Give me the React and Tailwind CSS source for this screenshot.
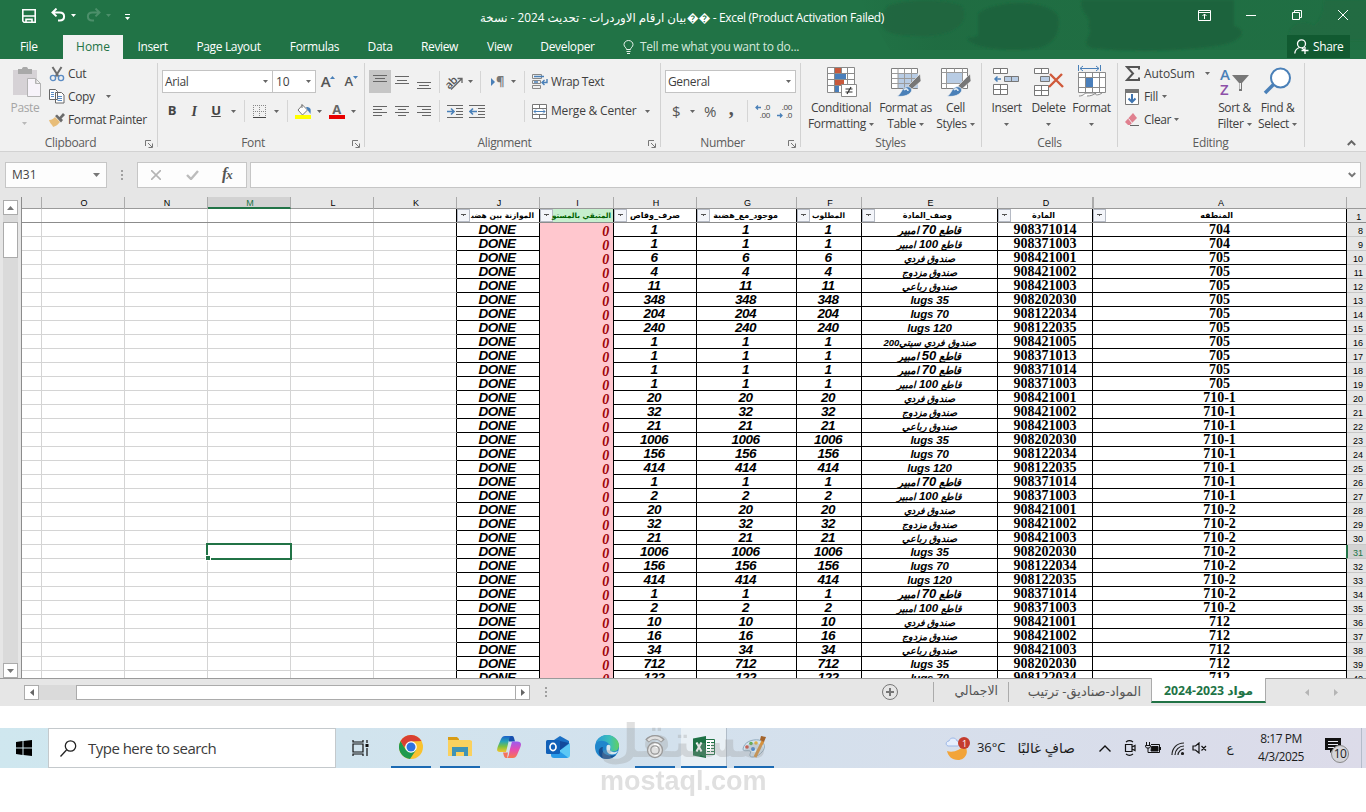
const MATERIALS = {
  q50: ["908371013", "50", "q"],
  q70: ["908371014", "70", "q"],
  q100: ["908371003", "100", "q"],
  s1: ["908421001", "صندوق فردي"],
  s2: ["908421002", "صندوق مزدوج"],
  s4: ["908421003", "صندوق رباعي"],
  s200: ["908421005", "صندوق فردي سيتي200"],
  l35: ["908202030", "lugs 35"],
  l70: ["908122034", "lugs 70"],
  l120: ["908122035", "lugs 120"],
};

const ROWS = [
  ["704", "q70", 1], ["704", "q100", 1], ["705", "s1", 6], ["705", "s2", 4],
  ["705", "s4", 11], ["705", "l35", 348], ["705", "l70", 204], ["705", "l120", 240],
  ["705", "s200", 1], ["705", "q50", 1], ["705", "q70", 1], ["705", "q100", 1],
  ["710-1", "s1", 20], ["710-1", "s2", 32], ["710-1", "s4", 21], ["710-1", "l35", 1006],
  ["710-1", "l70", 156], ["710-1", "l120", 414], ["710-1", "q70", 1], ["710-1", "q100", 2],
  ["710-2", "s1", 20], ["710-2", "s2", 32], ["710-2", "s4", 21], ["710-2", "l35", 1006],
  ["710-2", "l70", 156], ["710-2", "l120", 414], ["710-2", "q70", 1], ["710-2", "q100", 2],
  ["712", "s1", 10], ["712", "s2", 16], ["712", "s4", 34], ["712", "l35", 712],
  ["712", "l70", 122],
];

const GRID =
  "grid grid-cols-[20px_83px_83px_83px_83px_83px_83px_74px_83px_100px_65px_136px_95px_254px_19px]";

const HEADERS = [
  ["J", "الموازنة بين هضب\u200d", "pr-[5px] text-[7.5px] tracking-[-0.2px]"],
  ["I", "المتبقي بالمستو", "pr-[2px] text-[7.25px] tracking-[-0.2px]"],
  ["H", "صرف_وقاص", "pr-[16px] text-[8px]"],
  ["G", "موجود_مع_هضبة", "pr-[18px] text-[8px]"],
  ["F", "المطلوب", "pr-[16px] text-[7.5px]"],
  ["E", "وصف_المادة", "pr-[45px] text-[8px]"],
  ["D", "المادة", "pr-[37px] text-[8px]"],
  ["A", "المنطقه", "pr-[113px] text-[8px]"],
];

function Caret({ className = "" }) {
  return (
    <svg className={`shrink-0 ${className}`} width="5" height="3" viewBox="0 0 5 3" fill="#666">
      <path d="M0 0h5L2.5 3z" />
    </svg>
  );
}

function Sep({ className = "" }) {
  return <div className={`w-px shrink-0 bg-[#d5d5d5] ${className}`} />;
}

function Slot({ w, children, className = "" }) {
  return (
    <div className={`flex h-full shrink-0 items-center justify-center ${w} ${className}`}>
      {children}
    </div>
  );
}

function Group({ w, label, labelPad = "", launcher, children }) {
  return (
    <div className={`flex shrink-0 ${w}`}>
      <div className="flex min-w-0 flex-1 flex-col">
        <div className="h-[77px]">{children}</div>
        <div className="flex h-[14px] items-center text-[12px] text-[#5c5c5c]">
          <span className={`flex-1 text-center ${labelPad}`}>{label}</span>
          {launcher && (
            <svg className="mt-[2px] mr-[4px]" width="8" height="8" viewBox="0 0 8 8" fill="none" stroke="#777">
              <path d="M.5 6V.5H6M3 3l4 4M7.5 3.5v4h-4" />
            </svg>
          )}
        </div>
      </div>
      <div className="mt-1 h-[84px] w-px bg-[#d2d2d2]" />
    </div>
  );
}

function BigButton({ w, icon, lines }) {
  return (
    <div className={`flex shrink-0 flex-col items-center ${w}`}>
      <div className="flex h-[41px] items-end pb-[3px]">{icon}</div>
      <div className="h-4 leading-4 whitespace-nowrap">{lines[0]}</div>
      <div className="flex h-4 items-center gap-[3px] leading-4 whitespace-nowrap">
        {lines[1]}
        <Caret />
      </div>
    </div>
  );
}

function TitleBar() {
  return (
    <div className="relative flex h-[35px] text-white">
      <svg className="absolute top-0 left-[860px]" width="506" height="59" viewBox="0 0 506 59" fill="#1f643d">
        <defs>
          <linearGradient id="ink">
            <stop offset="0" stopColor="#1f6b41" stopOpacity="0" />
            <stop offset=".15" stopColor="#1f6b41" stopOpacity=".8" />
            <stop offset="1" stopColor="#1f6b41" stopOpacity=".5" />
          </linearGradient>
          <filter id="soften"><feGaussianBlur stdDeviation="1.2" /></filter>
        </defs>
        <path fill="url(#ink)" d="M0 0h506v50H30z" />
        <g filter="url(#soften)">
          <path d="M28 6c18-8 60-6 74 0 8 14-4 32-46 30-26 0-46-6-28-30z" opacity=".8" />
          <path d="M118 14c14-14 70-16 80 2 4 16-6 30-20 32-22 3-52 2-66-5-12-8 4-4 6-8z" />
          <path d="M222 0h152v26c14 4 8 14-8 18-40 8-100 8-134 4-14-6 4-14-4-22 6-8-10-14-6-26z" />
          <path d="M430 40c-4-14 12-22 24-14 8-6 10-16 10-26h42v40z" opacity=".45" />
        </g>
      </svg>
      <div className="relative flex w-full items-center">
        <svg className="mb-[4px] ml-[22px]" width="14" height="14" viewBox="0 0 14 14" fill="none" stroke="#fff" strokeWidth="1.6">
          <path d="M.8.8h12.4v12.4H2L.8 12zM1 7h12M4 13v-2.600h6V13" />
        </svg>
        <svg className="mb-[5px] ml-[15px]" width="15" height="14" viewBox="0 0 15 14" fill="none" stroke="#fff" strokeWidth="2">
          <path d="M5.5.6 1.500 4.500l4 3.900M2 4.500h6.500c3 0 4.600 1.800 4.600 4s-1.600 4-4.400 4H7" />
        </svg>
        <svg className="mb-[5px] ml-[5px]" width="5" height="3" fill="#fff"><path d="M0 0h5L2.500 3z" /></svg>
        <svg className="mb-[5px] ml-[10px]" width="15" height="14" viewBox="0 0 15 14" fill="none" stroke="#4c8f6a" strokeWidth="2">
          <path d="m9.500.6 4 3.900-4 3.900M13 4.500H6.500c-3 0-4.600 1.800-4.600 4s1.600 4 4.400 4H8" />
        </svg>
        <svg className="mb-[5px] ml-[5px]" width="5" height="3" fill="#4c8f6a"><path d="M0 0h5L2.500 3z" /></svg>
        <svg className="mb-[1px] ml-[14px]" width="5" height="7" fill="#fff"><path d="M0 0h5v1H0zM0 3h5L2.500 6z" /></svg>
        <div className="ml-[350px] flex w-[404px] items-center justify-between text-[12px] whitespace-nowrap">
          <span dir="rtl" className="text-[11.750px] tracking-normal">بيان ارقام الاوردرات - تحديث 2024 - نسخة</span>
          <span className="tracking-[-0.370px]">�� - Excel (Product Activation Failed)</span>
        </div>
        <svg className="mb-[5px] ml-[314px]" width="13" height="11" viewBox="0 0 13 11" fill="none" stroke="#fff">
          <path d="M.5.5h12v10H.5zM.5 2.500h12M6.500 9V4M4.500 6l2-2 2 2" />
        </svg>
        <svg className="mb-[5px] ml-[35px]" width="10" height="1" stroke="#fff"><path d="M0 .5h10" /></svg>
        <svg className="mb-[5px] ml-[36px]" width="10" height="10" viewBox="0 0 10 10" fill="none" stroke="#fff">
          <path d="M.5 2.500h7v7h-7zM2.500 2.500v-2h7v7h-2" />
        </svg>
        <svg className="mb-[5px] ml-[36px]" width="10" height="10" stroke="#fff"><path d="m0 0 10 10M10 0 0 10" /></svg>
      </div>
    </div>
  );
}

function Tabs() {
  return (
    <div className="relative flex h-6 items-center text-[12px] text-white">
      <div className="w-[63px] pl-[20px]">File</div>
      <div className="flex h-full w-[60px] items-center justify-center bg-[#f1f1f1] tracking-normal text-[#217346]">Home</div>
      <div className="w-[59px] text-center">Insert</div>
      <div className="w-[93px] text-center">Page Layout</div>
      <div className="w-[79px] text-center">Formulas</div>
      <div className="w-[52px] text-center">Data</div>
      <div className="w-[67px] text-center">Review</div>
      <div className="w-[53px] text-center">View</div>
      <div className="w-[83px] text-center">Developer</div>
      <svg className="ml-[14px]" width="11" height="14" viewBox="0 0 11 14" fill="none" stroke="#e6f2ea">
        <path d="M3.500 9.500C3.500 7.500 1 7 1 4.600a4.500 4.100 0 0 1 9 0C10 7 7.500 7.500 7.500 9.500zM3.500 11.500h4M4 13.500h3" />
      </svg>
      <div className="ml-[6px] w-[160px] tracking-[-0.270px] whitespace-nowrap text-[#d6e8dd]">Tell me what you want to do...</div>
      <div className="mb-px ml-[487px] flex h-[23px] w-[63px] items-center bg-[#115a31] pl-[7px]">
        <svg width="15" height="15" viewBox="0 0 15 15" fill="none" stroke="#fff" strokeWidth="1.300">
          <circle cx="7.500" cy="4.800" r="4" />
          <path d="M5.500 8.500C2.500 9.500 1 11.500.8 14.500M8 9l2.500 2M11 8v7M7.500 11.500h7" />
        </svg>
        <span className="ml-[4px]">Share</span>
      </div>
    </div>
  );
}

function Lines({ rows, className = "" }) {
  return (
    <svg className={className} width="15" height="14" viewBox="0 0 15 14" stroke="#666">
      {rows.map(([x, y, w]) => (
        <path key={y} d={`M${x} ${y + 0.5}h${w}`} />
      ))}
    </svg>
  );
}

function TableIcon({ highlight }) {
  return (
    <svg width="31" height="30" viewBox="0 0 31 30" fill="none" stroke="#808080">
      <path fill="#fff" d="M1.500 1.500h26v20h-26z" />
      <path fill="#b8cce4" stroke="none" d={highlight ? "M7 6h15v10H7z" : "M8 6h20v15H8z"} />
      <path stroke="#9a9a9a" d={highlight ? "M1.500 5.500h26M1.500 16.500h26M6.500 1.500v20M22.500 1.500v20M14.500 1.500v4" : "M1.500 6.500h26M1.500 11.500h26M1.500 16.500h26M8 1.500v20M14.500 1.500v20M21.500 1.500v20"} />
      <path fill="#777" stroke="#f1f1f1" strokeWidth=".6" d="m30 7 1 7-9 8-4-3z" />
      <path fill="#4a80b8" stroke="#f1f1f1" strokeWidth=".6" d="M7 29c4-1 4-7 9-9 4-1 7 2 5 5-3 4-9 5-14 4z" />
      <path stroke="#dce8f4" strokeWidth="1.600" d="M14 23c2-2 4-1 4 1" />
    </svg>
  );
}

function Ribbon() {
  return (
    <div className="flex h-[93px] border-b border-[#d2d2d2] bg-[#f1f1f1] text-[12px] text-[#3f3f3f]">
      <Group w="w-[158px]" label="Clipboard" labelPad="pr-[4px]" launcher>
        <div className="flex">
          <div className="flex w-[49px] flex-col items-center text-[#a5a5a5]">
            <svg className="mt-[8px] ml-[5px]" width="29" height="31" viewBox="0 0 29 31">
              <path fill="#d6d2d6" d="M0 3h24v25H0z" />
              <path fill="#a9a9a9" d="M5 2h4c0-3 6-3 6 0h4v5H5z" />
              <path fill="#f7f3fa" stroke="#b3b3b3" d="M14.500 11.500h8l5 5v13h-13zM22.500 11.500v5h5" />
            </svg>
            <div className="mt-[2px] ml-[1px] leading-4">Paste</div>
            <Caret className="mt-[6px] opacity-40" />
          </div>
          <div className="pt-[3px]">
            <div className="flex h-[23px] items-center">
              <svg width="16" height="16" viewBox="0 0 16 16" fill="none" stroke="#6d6d6d" strokeWidth="2">
                <path d="m3.500 1 6 9.500M12.500 1l-6 9.500" />
                <circle cx="4" cy="12" r="2.600" stroke="#5b8cc4" strokeWidth="1.400" />
                <circle cx="12" cy="12" r="2.600" stroke="#5b8cc4" strokeWidth="1.400" />
              </svg>
              <span className="ml-[3px]">Cut</span>
            </div>
            <div className="flex h-[23px] items-center">
              <svg width="16" height="15" viewBox="0 0 16 15" fill="#fff" stroke="#666">
                <path d="M.5.5h6l2 2v8h-8zM6.500 3.500h6l2.500 2.500v8H6.500z" />
                <path stroke="#5b8cc4" d="M2 3.500h3M2 5.500h3M2 7.500h3M8.500 7.500h4.500M8.500 9.500h4.500M8.500 11.500h4.500" />
              </svg>
              <span className="ml-[3px]">Copy</span>
              <Caret className="ml-[11px]" />
            </div>
            <div className="flex h-[23px] items-center">
              <svg width="16" height="14" viewBox="0 0 16 14">
                <path fill="#e8bd78" d="M0 7c3 0 5-2 6-3l5 5c-2 2-3 4-7 5 0-2-3-3-4-7z" />
                <path fill="#6b6b6b" d="m6 3 2-1.500 2.500 2.500L14 0l2 2-3.500 3.500L14 7l-2 2.500z" />
              </svg>
              <span className="ml-[3px] whitespace-nowrap">Format Painter</span>
            </div>
          </div>
        </div>
      </Group>

      <Group w="w-[207px]" label="Font" labelPad="pl-[4px] pr-[8px]" launcher>
        <div className="mt-[11px] mb-[7px] flex h-[23px] items-center pl-[4px]">
          <div className="flex h-full w-[111px] items-center justify-between border border-[#c3c3c3] bg-white pr-[4px] pl-[2px]">
            Arial <Caret />
          </div>
          <div className="flex h-full w-[43px] items-center justify-between border border-l-0 border-[#c3c3c3] bg-white pr-[4px] pl-[3px] tracking-normal">
            10 <Caret />
          </div>
          <Slot w="w-[24px]">
            <span className="text-[15px] leading-none font-semibold text-[#555]">A</span>
            <svg className="mb-[9px]" width="5" height="3" fill="#4a80b8"><path d="M0 3h5L2.500 0z" /></svg>
          </Slot>
          <Slot w="w-[22px]">
            <span className="text-[13px] leading-none font-semibold text-[#555]">A</span>
            <svg className="mb-[9px]" width="5" height="3" fill="#4a80b8"><path d="M0 0h5L2.500 3z" /></svg>
          </Slot>
        </div>
        <div className="flex h-[22px] items-center pl-[3px] text-[13px] text-[#444]">
          <Slot w="w-[22px]" className="font-bold">B</Slot>
          <Slot w="w-[22px]" className="font-['Liberation_Serif'] text-[14px] font-bold italic">I</Slot>
          <Slot w="w-[22px]" className="font-bold underline">U</Slot>
          <Slot w="w-[13px]"><Caret /></Slot>
          <Slot w="w-[8px]"><Sep className="h-[22px]" /></Slot>
          <Slot w="w-[22px]">
            <svg width="13" height="13" viewBox="0 0 13 13" fill="none" stroke="#888">
              <path strokeDasharray="1 1" d="M.5 0v12M6.500 0v12M12.500 0v12M0 .5h13M0 6.500h13" />
              <path stroke="#444" d="M0 12.500h13" />
            </svg>
          </Slot>
          <Slot w="w-[12px]"><Caret /></Slot>
          <Slot w="w-[11px]"><Sep className="h-[22px]" /></Slot>
          <Slot w="w-[20px]">
            <svg width="17" height="16" viewBox="0 0 17 16">
              <path fill="#ff0" d="M0 12h16v4H0z" />
              <path fill="#fff" stroke="#777" d="m7.500 2 5 5-5 5-4.500-5zM7 5V1" />
              <path fill="#4a80b8" d="M11 4c5 0 5 2 4.500 7L12.500 7z" />
            </svg>
          </Slot>
          <Slot w="w-[12px]"><Caret /></Slot>
          <Slot w="w-[23px]">
            <div className="flex h-4 w-4 items-start justify-center border-b-4 border-[#e80000] text-[13px] leading-[12px] font-bold text-[#666]">A</div>
          </Slot>
          <Slot w="w-[10px]"><Caret /></Slot>
        </div>
      </Group>

      <Group w="w-[296px]" label="Alignment" labelPad="pr-[4px]" launcher>
        <div className="mt-[11px] mb-[7px] flex h-[23px] items-center pl-[4px]">
          <Slot w="w-[22px]" className="bg-[#c6c6c6]"><Lines rows={[[0, 2, 14], [2, 5, 10], [0, 8, 14]]} className="mb-1" /></Slot>
          <Slot w="w-[22px]"><Lines rows={[[0, 2, 14], [2, 6, 10], [0, 9, 14]]} className="mb-px" /></Slot>
          <Slot w="w-[22px]"><Lines rows={[[0, 5, 14], [2, 8, 10], [0, 11, 14]]} className="mt-1" /></Slot>
          <Slot w="w-[8px]"><Sep className="h-[22px]" /></Slot>
          <Slot w="w-[23px]">
            <svg width="17" height="16" viewBox="0 0 17 16" fill="none" stroke="#666" className="overflow-visible">
              <path strokeWidth="1.300" d="M5 15.500 15.500 5M11.500 4.500H16v4.500" />
              <text x="-1.500" y="11.500" transform="rotate(-45 6 8)" fontSize="11" fill="#555" stroke="none" fontWeight="600">ab</text>
            </svg>
          </Slot>
          <Slot w="w-[8px]"><Caret /></Slot>
          <Slot w="w-[12px]"><Sep className="h-[22px]" /></Slot>
          <Slot w="w-[23px]">
            <svg width="5" height="8" fill="#4a80b8"><path d="M0 0v8l4-4z" /></svg>
            <span className="text-[13px] leading-none font-bold text-[#777]">¶</span>
          </Slot>
          <Slot w="w-[8px]"><Caret /></Slot>
          <Slot w="w-[14px]"><Sep className="h-[22px]" /></Slot>
          <svg className="ml-px shrink-0" width="16" height="16" viewBox="0 0 16 16" fill="none" stroke="#888">
            <path d="M.5.500h9v4h-9zM.5 6.500h8v3h-8zM.5 11.500h8v3h-8z" />
            <path stroke="#4a80b8" strokeWidth="1.400" d="M2 2.500h10M2 8h4M15 5v3.500h-5M12.500 6l-2.500 2.500 2.500 2.500" />
          </svg>
          <span className="ml-[3px] tracking-[-0.450px] whitespace-nowrap">Wrap Text</span>
        </div>
        <div className="flex h-[22px] items-center pl-[4px]">
          <Slot w="w-[22px]"><Lines rows={[[0, 2, 14], [0, 5, 9], [0, 8, 14], [0, 11, 9]]} /></Slot>
          <Slot w="w-[22px]"><Lines rows={[[0, 2, 14], [3, 5, 8], [0, 8, 14], [3, 11, 8]]} /></Slot>
          <Slot w="w-[22px]"><Lines rows={[[0, 2, 14], [5, 5, 9], [0, 8, 14], [5, 11, 9]]} /></Slot>
          <Slot w="w-[8px]"><Sep className="h-[22px]" /></Slot>
          <Slot w="w-[24px]">
            <svg width="16" height="13" viewBox="0 0 16 13" stroke="#666" fill="none">
              <path d="M0 .5h16M9 3.500h7M9 6.500h7M9 9.500h7M0 12.500h16" />
              <path stroke="#4a80b8" strokeWidth="1.600" d="M0 6.500h7M4 3.500l3 3-3 3" />
            </svg>
          </Slot>
          <Slot w="w-[20px]">
            <svg width="16" height="13" viewBox="0 0 16 13" stroke="#666" fill="none">
              <path d="M0 .5h16M9 3.500h7M9 6.500h7M9 9.500h7M0 12.500h16" />
              <path stroke="#4a80b8" strokeWidth="1.600" d="M1 6.500h7M4 3.500l-3 3 3 3" />
            </svg>
          </Slot>
          <Slot w="w-[38px]" className="justify-end"><Sep className="h-[22px]" /></Slot>
          <svg className="ml-[7px] shrink-0" width="15" height="15" viewBox="0 0 15 15" fill="#fff" stroke="#777">
            <path d="M.5.500h14v14H.5zM.5 4.500h14M.5 10.500h14M7.500.500v4M7.500 10.500v4" />
            <path stroke="#4a80b8" d="M2 7.500h11M4 5.500l-2 2 2 2M11 5.500l2 2-2 2" />
          </svg>
          <span className="ml-[4px] whitespace-nowrap tracking-[-0.200px]">Merge &amp; Center</span>
          <Caret className="ml-[9px]" />
        </div>
      </Group>

      <Group w="w-[140px]" label="Number" labelPad="pr-[4px]" launcher>
        <div className="mt-[11px] mb-[7px] ml-[4px] flex h-[23px] w-[131px] items-center justify-between border border-[#c3c3c3] bg-white pr-[4px] pl-[2px]">
          General <Caret />
        </div>
        <div className="flex h-[22px] items-center pl-[4px] text-[15px] text-[#555]">
          <Slot w="w-[22px]">$</Slot>
          <Slot w="w-[10px]"><Caret /></Slot>
          <Slot w="w-[26px]">%</Slot>
          <Slot w="w-[16px]" className="pb-[7px] font-['Liberation_Serif'] text-[20px] font-bold">,</Slot>
          <Slot w="w-[16px]"><Sep className="h-[22px]" /></Slot>
          <Slot w="w-[15px]" className="flex-col text-[8px] leading-[8px] text-[#444]">
            <div className="flex h-[8px] w-[15px] items-center justify-between">
              <svg width="6" height="5" fill="none" stroke="#4a80b8" strokeWidth="1.300"><path d="M1 2.500h5M3 .5 1 2.500l2 2" /></svg>
              .0
            </div>
            <div className="h-[8px] w-[15px] text-right">.00</div>
          </Slot>
          <Slot w="w-[29px]" className="flex-col text-[8px] leading-[8px] text-[#444]">
            <div className="h-[8px] w-[15px] text-right">.00</div>
            <div className="flex h-[8px] w-[15px] items-center justify-between">
              <svg width="6" height="5" fill="none" stroke="#4a80b8" strokeWidth="1.300"><path d="M0 2.500h5M3 .5l2 2-2 2" /></svg>
              .0
            </div>
          </Slot>
        </div>
      </Group>

      <Group w="w-[181px]" label="Styles" labelPad="pr-[1px]">
        <div className="flex">
          <BigButton
            w="w-[80px]"
            lines={["Conditional", "Formatting"]}
            icon={
              <svg width="31" height="31" viewBox="0 0 31 31" fill="#fff" stroke="#8a8a8a">
                <path d="M1.500 1.500h27v25h-27z" />
                <path stroke="none" fill="#c8593c" d="M9 2h6v6H9zM9 14h9v6H9z" />
                <path stroke="none" fill="#4a7fbb" d="M9 8h11v6H9zM9 20h4v6H9z" />
                <path fill="none" d="M1.500 7.500h27M1.500 13.500h27M1.500 19.500h27M8.500 1.500v25M15.500 1.500v6M21.500 1.500v25" />
                <path d="M15.500 18.500h15v12h-15z" />
                <path stroke="#333" strokeWidth="1.200" d="M19.500 23h7M19.500 26h7M25 21l-4 7" />
              </svg>
            }
          />
          <BigButton w="w-[49px]" lines={["Format as", "Table"]} icon={<TableIcon />} />
          <BigButton w="w-[51px]" lines={["Cell", "Styles"]} icon={<TableIcon highlight />} />
        </div>
      </Group>

      <Group w="w-[136px]" label="Cells">
        <div className="flex pl-[3px]">
          <BigButton
            w="w-[43px]"
            lines={["Insert", null]}
            icon={
              <svg width="27" height="30" viewBox="0 0 27 30" fill="#fff" stroke="#777">
                <path d="M.5 1.500h14v5H.5zM7.500 1.500v5M.5 17.500h14v10H.5zM.5 22.500h14M7.500 17.500v10" />
                <path fill="#b8cce4" d="M11.500 9.500h14v5h-14zM18.500 9.500v5" />
                <path fill="none" stroke="#4a80b8" strokeWidth="1.500" d="M2 12h6M4.500 9.500 2 12l2.500 2.500" />
              </svg>
            }
          />
          <BigButton
            w="w-[41px]"
            lines={["Delete", null]}
            icon={
              <svg width="30" height="30" viewBox="0 0 30 30" fill="#fff" stroke="#777">
                <path d="M.5 1.500h14v5H.5zM7.500 1.500v5M.5 18.500h14v10H.5zM.5 23.500h14M7.500 18.500v10" />
                <path fill="#b8cce4" d="M6.500 9.500h9v5h-9z" />
                <path fill="none" stroke="#d0593a" strokeWidth="2.400" d="m16 7 13 13M28 7 15 20" />
              </svg>
            }
          />
          <BigButton
            w="w-[45px]"
            lines={["Format", null]}
            icon={
              <svg width="28" height="32" viewBox="0 0 28 32" fill="#fff" stroke="#8a8a8a">
                <path d="M.5 7.500h27v20H.5zM.5 12.500h27M.5 22.500h27M7.500 7.500v20M14.500 7.500v20M21.500 7.500v20" />
                <path fill="#4a7fbb" stroke="none" d="M8 13h7v9H8z" />
                <path fill="none" stroke="#4a80b8" d="M.5 0v6M22.500 0v6M2 3.500h19M5 1 2 3.500 5 6M18 1l3 2.500L18 6" />
                <path d="M1 31c5 0 5-3 8-3h9c-3 2-5 3-9 3M18 28c-2 2 2 3 6 0" />
              </svg>
            }
          />
        </div>
      </Group>

      <Group w="w-[187px]" label="Editing" labelPad="pr-px">
        <div className="flex">
          <div className="w-[95px] pt-[3px] pl-[7px]">
            <div className="flex h-[23px] items-center">
              <svg width="15" height="15" viewBox="0 0 15 15" fill="none" stroke="#555" strokeWidth="2">
                <path d="M14 3.500V1H2l6 6.500L2 14h12v-2.500" />
              </svg>
              <span className="ml-[4px] tracking-[-0.100px]">AutoSum</span>
              <Caret className="ml-[10px]" />
            </div>
            <div className="flex h-[23px] items-center">
              <svg width="14" height="16" viewBox="0 0 14 16" fill="#fff" stroke="#777">
                <path d="M.5.500h13v15H.5z" />
                <path fill="#777" d="M.5.500h13v3H.5z" />
                <path fill="none" stroke="#3f74b0" strokeWidth="2" d="M7 5v8M3.500 9.500 7 13l3.500-3.500" />
              </svg>
              <span className="ml-[5px]">Fill</span>
              <Caret className="ml-[4px]" />
            </div>
            <div className="flex h-[23px] items-center">
              <svg width="14" height="14" viewBox="0 0 14 14">
                <path fill="#e0808f" d="m8 0 4 5-7 7H3L0 9z" />
                <path stroke="#f1f1f1" d="m3.500 5.500 4 5" />
                <path stroke="#666" d="M5 12.500h9" />
              </svg>
              <span className="ml-[5px]">Clear</span>
              <Caret className="ml-[3px]" />
            </div>
          </div>
          <BigButton
            w="w-[43px]"
            lines={["Sort &", "Filter"]}
            icon={
              <div className="flex h-[30px] w-[29px] font-semibold">
                <div className="w-[12px] text-[15px] leading-[15px]">
                  <div className="text-[#4a80b8]">A</div>
                  <div className="text-[#8d50a8]">Z</div>
                </div>
                <svg className="mt-[8px]" width="17" height="16" viewBox="0 0 17 16">
                  <path fill="#777" d="M0 0h17l-7 8v8H7V8z" />
                  <path fill="#f1f1f1" d="M7.500 8H9v6H7.500z" />
                </svg>
              </div>
            }
          />
          <BigButton
            w="w-[43px]"
            lines={["Find &", "Select"]}
            icon={
              <svg width="29" height="30" viewBox="0 0 29 30" fill="#fff" stroke="#4a80b8">
                <path strokeWidth="3.500" d="m11 17-9 9" />
                <circle cx="17.500" cy="11" r="9.500" strokeWidth="2" />
              </svg>
            }
          />
        </div>
      </Group>
      <svg className="mt-[81px] ml-[42px]" width="9" height="6" fill="none" stroke="#666" strokeWidth="2">
        <path d="m.8 5 3.700-3.700L8.200 5" />
      </svg>
    </div>
  );
}

function FormulaBar() {
  return (
    <div className="flex h-[45px] bg-[#e6e6e6] pt-[10px] text-[12px] text-[#444]">
      <div className="ml-[5px] flex h-[26px] w-[102px] items-center justify-between border border-[#c6c6c6] bg-[#fdfdfd] pr-[6px] pl-[6px] tracking-normal">
        M31
        <svg width="7" height="4" fill="#777"><path d="M0 0h7L3.500 4z" /></svg>
      </div>
      <svg className="mt-[8px] ml-[14px]" width="2" height="10" fill="#a0a0a0"><path d="M0 0h2v2H0zM0 4h2v2H0zM0 8h2v2H0z" /></svg>
      <div className="ml-[14px] flex h-[26px] w-[110px] items-center border border-[#c6c6c6] bg-[#fdfdfd]">
        <svg className="ml-[13px]" width="10" height="10" stroke="#b5b5b5" strokeWidth="1.600"><path d="m0 0 10 10M10 0 0 10" /></svg>
        <svg className="ml-[25px]" width="13" height="10" fill="none" stroke="#bcbcbc" strokeWidth="2.400"><path d="m1 5 4 4 7-8" /></svg>
        <span className="ml-[23px] pb-[3px] font-['Liberation_Serif'] text-[16px] leading-none font-bold tracking-[-1px] text-[#555] italic">
          f<span className="text-[13px]">x</span>
        </span>
      </div>
      <div className="ml-[3px] flex h-[26px] w-[1111px] items-center justify-end border border-[#c6c6c6] bg-[#fdfdfd] pr-[4px]">
        <svg width="8" height="6" fill="none" stroke="#777" strokeWidth="2"><path d="M.8 1 4 4.200 7.200 1" /></svg>
      </div>
    </div>
  );
}

function VerticalScroll() {
  return (
    <div className="flex w-[21px] flex-col bg-[#e6e6e6] pt-[3px] pl-[3px]">
      <div className="flex h-[15px] w-[15px] items-center justify-center border border-[#ababab] bg-white">
        <svg width="7" height="4" fill="#777"><path d="M0 4h7L3.500 0z" /></svg>
      </div>
      <div className="w-[15px] flex-1 bg-[#dadada] pt-[7px]">
        <div className="h-[36px] border border-[#ababab] bg-white" />
      </div>
      <div className="flex h-[15px] w-[15px] items-center justify-center border border-[#ababab] bg-white">
        <svg width="7" height="4" fill="#777"><path d="M0 0h7L3.500 4z" /></svg>
      </div>
    </div>
  );
}

function EmptyCells({ selected, bottom = "border-b" }) {
  return ["P", "O", "N", "M", "L", "K"].map((c) => (
    <div
      key={c}
      className={`relative border-r border-b-[#d4d4d4] ${bottom} ${c === "K" ? "border-r-black" : "border-r-[#d4d4d4]"}`}
    >
      {selected && c === "M" && (
        <div className="absolute -top-[2px] -left-[2px] z-10 h-[17px] w-[86px] border-2 border-[#217346]">
          <div className="absolute -bottom-[3px] -left-[3px] h-[6px] w-[6px] border border-white bg-[#217346]" />
        </div>
      )}
    </div>
  ));
}

function Description({ id }) {
  const [, text, kind] = MATERIALS[id];
  if (kind === "q") {
    return (
      <span dir="rtl" className={text === "100" ? "text-[9.500px]" : "text-[10.500px]"}>
        قاطع <span className={text === "100" ? "text-[11.500px]" : "text-[13px]"}>{text}</span> امبير
      </span>
    );
  }
  return text.startsWith("lugs") ? (
    <span className="text-[11.500px] tracking-[-0.200px]">{text}</span>
  ) : (
    <span dir="rtl" className="text-[9.500px]">{text}</span>
  );
}

function DataRow({ row, number }) {
  const [area, id, qty] = row;
  const cell = "flex h-[14px] items-center justify-center border-r border-b border-black whitespace-nowrap";
  const num = `${cell} font-['Liberation_Sans'] text-[13.500px] font-bold italic leading-[13px] pr-[2px] tracking-[-0.500px]`;
  const serif = `${cell} font-['Liberation_Serif'] text-[14px] font-bold leading-[13px] tracking-normal`;
  const active = number === 31;
  return (
    <div className={`h-[14px] text-black ${GRID}`}>
      <EmptyCells selected={active} />
      <div className={num}>DONE</div>
      <div className="flex h-[14px] justify-end border-r border-black bg-[#ffc7ce] pr-[4px] font-['Liberation_Serif'] text-[14px] leading-[17px] font-bold text-[#9c0006] italic">
        0
      </div>
      <div className={num}>{qty}</div>
      <div className={num}>{qty}</div>
      <div className={num}>{qty}</div>
      <div className={`${cell} pt-px font-['Liberation_Sans','DejaVu_Sans',sans-serif] text-[10px] leading-[13px] font-bold italic`}>
        <Description id={id} />
      </div>
      <div className={serif}>{MATERIALS[id][0]}</div>
      <div className={serif}>{area}</div>
      <div
        className={`flex items-end justify-end border-b border-[#c8c8c8] pr-[3px] font-['Liberation_Sans'] text-[9px] leading-[10px] tracking-normal ${active ? "-ml-px border-l-2 border-l-[#217346] bg-[#d2d2d2] text-[#217346]" : "bg-[#e6e6e6]"}`}
      >
        {number}
      </div>
    </div>
  );
}

function Sheet() {
  return (
    <div className="flex h-[481px]">
      <VerticalScroll />
      <div className="min-w-0 flex-1 overflow-hidden border-l border-[#8c8c8c] bg-white">
        <div className={`-ml-px h-[12px] border-b border-[#9a9a9a] bg-[#e6e6e6] pl-px font-['Liberation_Sans'] text-[9px] leading-[12px] tracking-normal text-black ${GRID}`}>
          {["", "O", "N", "M", "L", "K", "J", "I", "H", "G", "F", "E", "D", "A"].map((c) => (
            <div
              key={c}
              className={`h-[12px] border-r border-[#ababab] pl-[2px] text-center ${c === "M" ? "border-b-2 border-b-[#217346] bg-[#d2d2d2] text-[#217346]" : ""} ${c === "A" ? "border-l" : ""}`}
            >
              {c}
            </div>
          ))}
        </div>
        <div className={`h-[14px] border-b border-[#8c8c8c] ${GRID}`}>
          <EmptyCells bottom="border-b-0" />
          {HEADERS.map(([c, text, fit]) => (
            <div
              key={c}
              className={`flex h-[13px] min-w-0 items-center border-r border-black ${c === "I" ? "bg-[#c6efce] text-[#006100]" : "text-black"}`}
            >
              <div className="flex h-[13px] w-[13px] shrink-0 items-center justify-center border border-[#b5bac4] bg-[#f3f5fa]">
                <svg width="5" height="3" fill="#555"><path d="M0 0h5v1H0zM2 1h1v1H2z" /></svg>
              </div>
              <div dir="rtl" className={`h-[13px] min-w-0 flex-1 font-['DejaVu_Sans',sans-serif] leading-[13px] font-bold whitespace-nowrap ${fit}`}>
                {text}
              </div>
            </div>
          ))}
          <div className="bg-[#e6e6e6] pt-[3px] pr-[5px] text-right font-['Liberation_Sans'] text-[9px] leading-[10px]">1</div>
        </div>
        {ROWS.map((row, i) => (
          <DataRow key={i} row={row} number={i + 8} />
        ))}
      </div>
    </div>
  );
}

function SheetTabs() {
  return (
    <div className="flex h-[28px] border-t border-[#9a9a9a] bg-[#e6e6e6] text-[12px] tracking-normal text-[#555]">
      <div className="mt-[6px] ml-[24px] flex h-[15px] w-[506px] bg-[#dadada]">
        <div className="flex w-[15px] items-center justify-center border border-[#ababab] bg-white">
          <svg width="4" height="7" fill="#666"><path d="M4 0v7L0 3.500z" /></svg>
        </div>
        <div className="ml-[37px] w-[440px] border border-[#ababab] bg-white" />
        <div className="-ml-px flex w-[15px] items-center justify-center border border-[#ababab] bg-white">
          <svg width="4" height="7" fill="#666"><path d="M0 0v7l4-3.500z" /></svg>
        </div>
      </div>
      <svg className="mt-[8px] ml-[15px]" width="2" height="10" fill="#a0a0a0"><path d="M0 0h2v2H0zM0 4h2v2H0zM0 8h2v2H0z" /></svg>
      <svg className="mt-[5px] ml-[335px]" width="16" height="16" fill="none" stroke="#777">
        <circle cx="8" cy="8" r="7.500" />
        <path strokeWidth="2" d="M8 4v8M4 8h8" />
      </svg>
      <Sep className="mt-[3px] ml-[35px] h-5 !bg-[#ababab]" />
      <div className="flex h-[25px] w-[74px] items-center justify-start pr-[10px] text-[12.500px]" dir="rtl">الاجمالي</div>
      <Sep className="mt-[3px] h-5 !bg-[#ababab]" />
      <div className="flex h-[25px] w-[142px] items-center justify-start pr-[10px] text-[13px] whitespace-nowrap" dir="rtl">المواد-صناديق- ترتيب</div>
      <div dir="rtl" className="-mt-px flex h-[25px] w-[115px] items-center justify-center border-x border-b-2 border-x-[#ababab] border-b-[#217346] bg-white pt-[3px] text-[12.250px] leading-[14px] font-bold whitespace-nowrap text-[#217346]">
        مواد 2023-2024
      </div>
      <svg className="mt-[10px] ml-[39px]" width="4" height="7" fill="#b5b5b5"><path d="M4 0v7L0 3.500z" /></svg>
      <svg className="mt-[10px] ml-[25px]" width="4" height="7" fill="#b5b5b5"><path d="M0 0v7l4-3.500z" /></svg>
    </div>
  );
}

function Chrome() {
  return (
    <svg width="24" height="24" viewBox="0 0 24 24">
      <circle cx="12" cy="12" r="12" fill="#f9c22e" />
      <path fill="#d93f32" d="M1.600 6a12 12 0 0 1 20.800 0H12z" />
      <path fill="#1f9a4d" d="M1.600 6A12 12 0 0 0 11 24l6-9H7z" />
      <path fill="#d93f32" d="M12 6h10.400L12 6.500 5 12 1.600 6z" />
      <circle cx="12" cy="12" r="5.800" fill="#fff" />
      <circle cx="12" cy="12" r="4.500" fill="#2f72e0" />
    </svg>
  );
}

function Explorer() {
  return (
    <svg width="24" height="20" viewBox="0 0 24 20">
      <path fill="#d99c14" d="M0 0h9l2 2v4H0z" />
      <path fill="#fad15e" d="M0 3h22l2 1v15H0z" />
      <path fill="#3f93b5" d="M4 10h16v9h-4v-4H8v4H4z" />
    </svg>
  );
}

function Copilot() {
  return (
    <svg width="24" height="22" viewBox="0 0 24 22">
      <defs>
        <linearGradient id="cpLeft" x1="0" y1="0" x2="0" y2="1">
          <stop offset="0" stopColor="#1b5fc8" />
          <stop offset=".35" stopColor="#27a5b8" />
          <stop offset=".65" stopColor="#7ac142" />
          <stop offset="1" stopColor="#f5c52c" />
        </linearGradient>
        <linearGradient id="cpRight" x1="0" y1="0" x2="0" y2="1">
          <stop offset="0" stopColor="#9a5cf0" />
          <stop offset=".5" stopColor="#e64cb0" />
          <stop offset="1" stopColor="#f8784c" />
        </linearGradient>
      </defs>
      <path fill="#174fae" d="M9 0h6c2 0 2 2 3 5.500h-6z" />
      <path fill="url(#cpLeft)" d="M8 0h6c-2 1-2 4-3 8l-2 8H3C-1 16 0 13 1 10l3-7c1-2 2-3 4-3z" />
      <path fill="url(#cpRight)" d="M15 5.500h5c4 0 5 2.500 3 6.500l-3 7c-1 2-2 3-4 3h-6c2-1 2-5 3-9z" />
      <path fill="#f4745c" d="M6 16.500h5l-1 5.500c-3 0-3-2-4-5.500z" />
    </svg>
  );
}

function Outlook() {
  return (
    <svg width="24" height="22" viewBox="0 0 24 22">
      <path fill="#1a6fc4" d="M5 6 14 0l9 5v9H5z" />
      <path fill="#5cc8f5" d="m24 7-11 8v7h8c2 0 3-1 3-3z" />
      <path fill="#2a9be8" d="M5 9l17 12.500c-1 .5-2 .5-3 .5H8c-2 0-3-1-3-3z" />
      <path fill="#134a9c" d="m14 5 9 2-9 7z" />
      <rect y="4" width="14" height="14" rx="1.500" fill="#1160b8" />
      <ellipse cx="7" cy="11" rx="3" ry="3.600" fill="none" stroke="#fff" strokeWidth="1.700" />
    </svg>
  );
}

function Edge() {
  return (
    <svg width="24" height="24" viewBox="0 0 24 24">
      <defs>
        <linearGradient id="edgeTop">
          <stop offset="0" stopColor="#2a9bd8" />
          <stop offset=".6" stopColor="#3cc0b8" />
          <stop offset="1" stopColor="#62d060" />
        </linearGradient>
      </defs>
      <circle cx="12" cy="12" r="12" fill="#1f86cc" />
      <path fill="url(#edgeTop)" d="M1 8C4-1 15-2 20 3c4 3 5 8 3 11-1 2-4 3-8 2 1-2 1-5-1-7-4-4-10-4-13-1z" />
      <path fill="#174f90" d="M8 12c-2 6 3 10 13 8-4 4-10 5-14 3-5-4-4-11 1-11z" />
      <path fill="#d6e6ee" d="M11.500 12c0-3 4-3 4 0 0 2-1 3 0 4 2 1.500 5 1.500 7.500 0-1 2.500-3 3.500-6 3.500-4 0-6-3-5.500-7.500z" />
    </svg>
  );
}

function Recorder() {
  return (
    <svg width="22" height="24" viewBox="0 0 22 24" fill="none">
      <path stroke="#999" strokeWidth="4.500" d="M3 6c4-5 12-5 16 0" />
      <path stroke="#fff" strokeWidth="2.500" d="M4 5.500c4-4 10-4 14 0" />
      <circle cx="11" cy="15" r="7.500" fill="#fff" stroke="#999" strokeWidth="1.300" />
      <circle cx="11" cy="15" r="4.200" stroke="#999" strokeWidth="1.300" />
    </svg>
  );
}

function ExcelIcon() {
  return (
    <svg width="22" height="22" viewBox="0 0 22 22">
      <path fill="#fff" stroke="#217346" d="M12 3.500h9.500v15H12z" />
      <path stroke="#217346" d="M14 6.500h3M18 6.500h3M14 9.500h3M18 9.500h3M14 12.500h3M18 12.500h3M14 15.500h3M18 15.500h3" />
      <path fill="#1e7145" d="m0 2.500 13-2.500v22L0 19.500z" />
      <path stroke="#fff" strokeWidth="2" d="m3.500 6.500 5 9M8.500 6.500l-5 9" />
    </svg>
  );
}

function Paint() {
  return (
    <svg width="25" height="24" viewBox="0 0 25 24">
      <path fill="#d3e3ee" stroke="#8fa9bc" d="M1 14C2 7 10 4 17 5c6 2 7 8 3 12-4 5-11 6-12 4s2-4 0-5-7 1-7-2z" />
      <circle cx="5" cy="12" r="1.800" fill="#cf5040" />
      <circle cx="9" cy="8.500" r="1.800" fill="#5cae50" />
      <circle cx="14" cy="8" r="1.800" fill="#e0b040" />
      <circle cx="11" cy="14" r="2" fill="#4a86cc" />
      <path stroke="#d6913c" strokeWidth="3" d="m13 22 8-16" />
      <path fill="#a4642c" d="m19 1 5 1-2 5-4-2z" />
    </svg>
  );
}

function TaskApp({ w, children, open, active }) {
  return (
    <div className={`flex shrink-0 flex-col items-center ${w}`}>
      <div className={`flex h-[38px] w-full items-center justify-center ${active ? "border-r border-[#b0bcc8] bg-[#e9f0f5]" : ""}`}>{children}</div>
      <div className={`h-[2px] ${active ? "w-full" : "w-[40px]"} ${open ? "bg-[#1b6ab3]" : ""}`} />
    </div>
  );
}

function Taskbar() {
  return (
    <div className="flex h-[40px] bg-linear-to-r from-[#cfe7ef] via-[#d3e1ed] to-[#dcdbe9] text-[#1c1c1c]">
      <div className="flex w-[48px] shrink-0 items-center justify-center">
        <svg width="16" height="16" viewBox="0 0 16 16">
          <path d="m0 2 6.500-1v6.500H0zM7.500.9 16 0v7.500H7.500zM0 8.500h6.500V15L0 14zM7.500 8.500H16V16l-8.500-1z" />
        </svg>
      </div>
      <div className="flex w-[288px] shrink-0 items-center border border-[#c4c9cc] bg-white pl-[11px]">
        <svg width="17" height="17" viewBox="0 0 17 17" fill="none" stroke="#222" strokeWidth="1.300">
          <circle cx="10.500" cy="6" r="5.200" />
          <path d="m6.500 10-6 6.500" />
        </svg>
        <span className="ml-[11px] text-[15px] tracking-[-0.520px] text-[#3b3b3b]">Type here to search</span>
      </div>
      <div className="flex w-[54px] shrink-0 items-center pl-[16px]">
        <svg width="17" height="16" viewBox="0 0 17 16" fill="none" stroke="#111" strokeWidth="1.200">
          <path d="M1 4h10v8H1zM1 0v2h10V0M1 16v-2h10v2M15 0v3M15 8v8" />
          <path fill="#111" stroke="none" d="M13.500 4h3v3h-3z" />
        </svg>
      </div>
      <TaskApp w="w-[42px]" open><Chrome /></TaskApp>
      <TaskApp w="w-[56px]" open><Explorer /></TaskApp>
      <TaskApp w="w-[42px]"><Copilot /></TaskApp>
      <TaskApp w="w-[56px]"><Outlook /></TaskApp>
      <TaskApp w="w-[42px]"><Edge /></TaskApp>
      <TaskApp w="w-[53px]" open><Recorder /></TaskApp>
      <TaskApp w="w-[46px]" open active><ExcelIcon /></TaskApp>
      <TaskApp w="w-[54px]" open><Paint /></TaskApp>
      <div className="flex min-w-0 flex-1 items-center text-[13px] [&>*]:shrink-0">
        <svg className="ml-[164px]" width="25" height="23" viewBox="0 0 25 23">
          <path fill="#f2a43a" d="M2 14c6 2 14-1 17-6 6 6 2 15-6 15-6 0-10-4-11-9z" />
          <path fill="#e6eefc" stroke="#9db8e8" d="M3 9C0 8 1 4 4 4c1-4 7-4 8 0 3 0 3 4 1 5z" />
          <circle cx="19" cy="6" r="6" fill="#c43c2e" />
          <text x="17" y="9.500" fontSize="9" fill="#fff">1</text>
        </svg>
        <span className="ml-[7px] w-[31px] tracking-[-0.100px] whitespace-nowrap">36°C</span>
        <span className="ml-[6px] w-[61px] text-start text-[13.750px] tracking-normal whitespace-nowrap" dir="rtl">صافٍ غالبًا</span>
        <svg className="ml-[24px]" width="12" height="7" fill="none" stroke="#111" strokeWidth="1.400"><path d="m.5 6.500 5.500-5.500 5.500 5.500" /></svg>
        <svg className="ml-[13px]" width="12" height="16" viewBox="0 0 12 16" fill="none" stroke="#111" strokeWidth="1.200">
          <path d="M1.500 4.500h6.500v7H1.500zM8 7l3-1.500v5L8 9M2 2C4 .500 7 .500 9 2M2 14c2 1.500 5 1.500 7 0" />
        </svg>
        <svg className="ml-[9px]" width="16" height="12" viewBox="0 0 16 12" fill="none" stroke="#111">
          <path d="M1.500 0v3M4.500 0v3M.5 3.500h5C5.500 6 4.500 6 3 6S.5 6 .5 3.500zM3 6v4.500h3M6 2.500h8.500v8H6" />
          <path fill="#111" d="M6.500 4.500h6.500v4.500H6z" />
          <path d="M15.500 5v3" />
        </svg>
        <svg className="ml-[10px]" width="14" height="13" viewBox="0 0 14 13" fill="none" stroke="#222" strokeWidth="1.200">
          <path d="M1 13C1 6 6 1 13 1M4 13c0-5 4-9 9-9M7 13c0-3 3-6 6-6" />
          <circle cx="11.500" cy="11.500" r="1" fill="#222" />
        </svg>
        <svg className="ml-[7px]" width="15" height="12" viewBox="0 0 15 12" fill="none" stroke="#111" strokeWidth="1.200">
          <path d="M1 4h2.500L7 1v10L3.500 8H1zM9.500 4l4.500 4.500M14 4 9.500 8.500" />
        </svg>
        <span className="ml-[18px] w-[10px] text-center text-[12px]">ع</span>
        <div className="ml-[16px] w-[60px] text-center text-[12px] leading-[18px] tracking-[-0.500px] whitespace-nowrap">
          <div>8:17 PM</div>
          <div>4/3/2025</div>
        </div>
        <div className="relative ml-[14px] h-[20px] w-[30px]">
          <svg width="16" height="15" viewBox="0 0 16 15">
            <path fill="#111" d="M0 0h16v12H8l-3 3v-3H0z" />
            <path stroke="#e8e8f0" d="M3 3.500h10M3 6.500h10M3 9.500h6" />
          </svg>
          <div className="absolute top-[7px] left-[6px] flex h-[18px] w-[18px] items-center justify-center rounded-full border border-[#888] bg-[#d5d5da] text-[12px] tracking-[-0.500px]">10</div>
        </div>
      </div>
      <div className="mr-[4px] w-px shrink-0 bg-[#b5bcca]" />
    </div>
  );
}

function Watermark() {
  return (
    <div className="pointer-events-none absolute top-[715px] left-[600px] z-20 w-[166px] text-[#9a9a9a] opacity-30">
      <div dir="rtl" className="flex h-[52px] items-center justify-center font-['DejaVu_Sans',sans-serif] text-[46px] leading-[52px] font-bold tracking-normal">مستقل</div>
      <div className="text-center font-['Liberation_Sans'] text-[27px] leading-[28px] font-bold tracking-normal">mostaql.com</div>
    </div>
  );
}

export default function App() {
  return (
    <div className="relative h-[812px] w-[1366px] overflow-hidden bg-white font-['Open_Sans','DejaVu_Sans',sans-serif] tracking-[-0.350px]">
      <div className="bg-[#217346]">
        <TitleBar />
        <Tabs />
      </div>
      <Ribbon />
      <FormulaBar />
      <Sheet />
      <SheetTabs />
      <div className="h-[22px]" />
      <Taskbar />
      <Watermark />
    </div>
  );
}
